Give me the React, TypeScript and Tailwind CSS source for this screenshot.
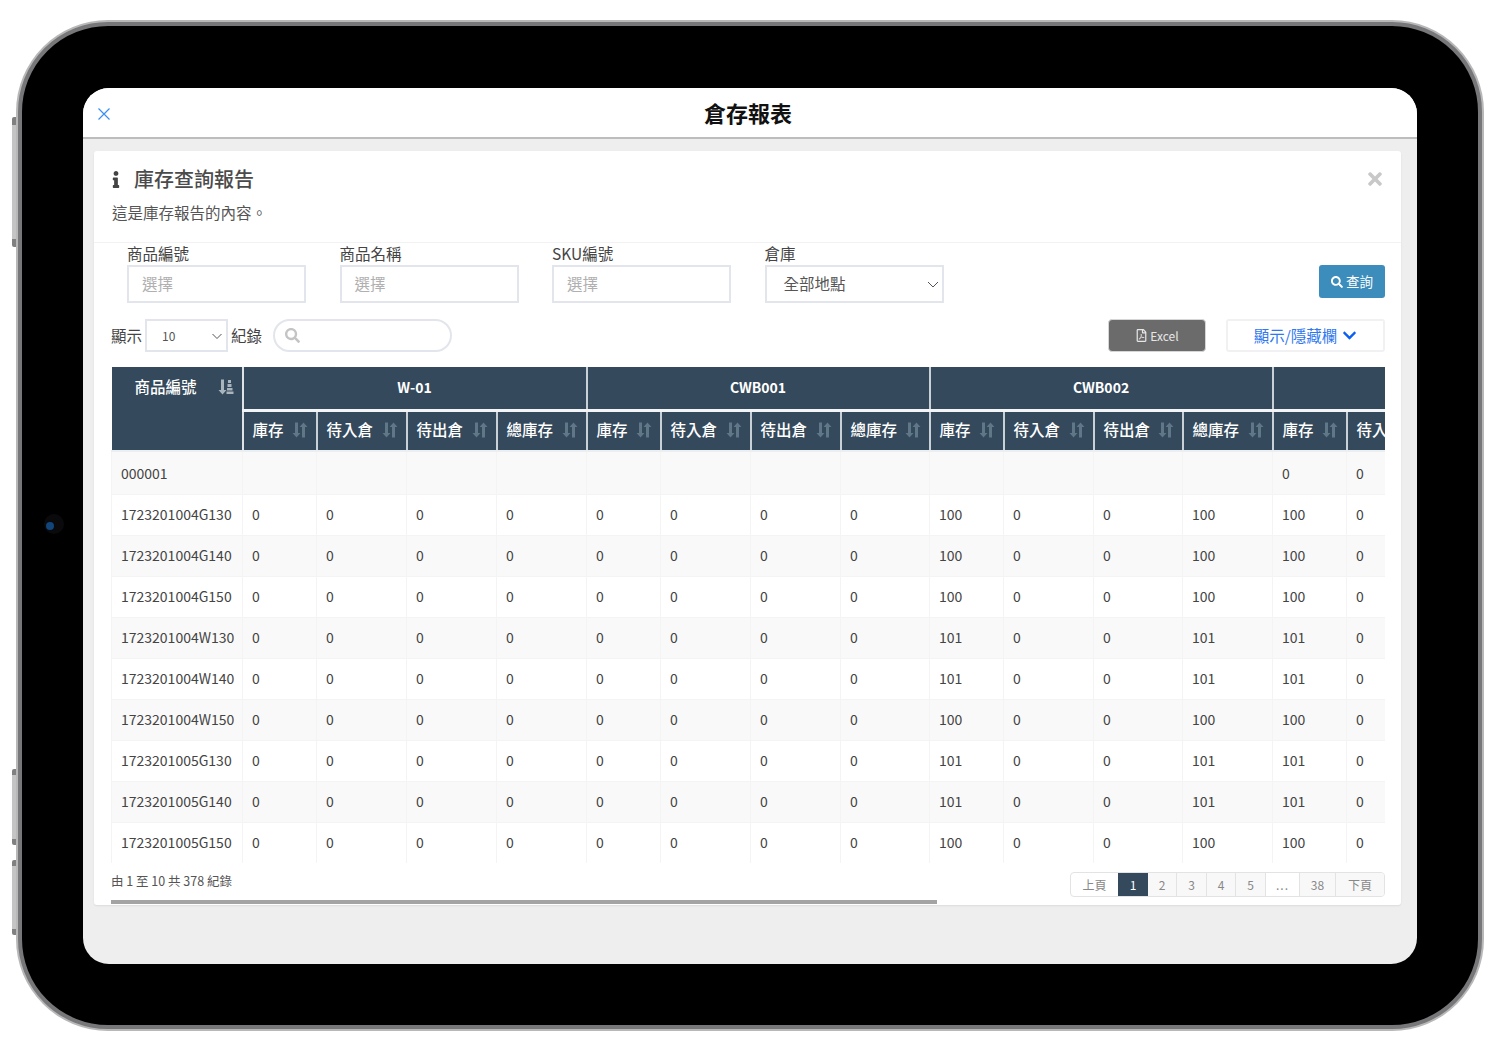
import { FaSearch, FaChevronDown, FaInfo, FaTimes, FaRegFilePdf } from "react-icons/fa";

const font = { fontFamily: '"Noto Sans CJK TC", "Noto Sans", sans-serif' };

function SortBoth() {
  return (
    <svg width="16" height="16" viewBox="0 0 16 16" className="shrink-0 text-[#5f7787]" fill="currentColor">
      <path d="M3 0.5h3v10.5h2.5L4.5 15.5 0.5 11H3z" />
      <path d="M10 15.5h3V5h2.5L11.5 0.5 7.5 5H10z" />
    </svg>
  );
}

function SortAsc() {
  return (
    <svg width="16" height="16" viewBox="0 0 16 16" className="shrink-0 text-[#a9b5bd]" fill="currentColor">
      <path d="M3 0.5h3v10.5h2.5L4.5 15.5 0.5 11H3z" />
      <rect x="10" y="1" width="3" height="3" />
      <rect x="9.5" y="5" width="4" height="3" />
      <rect x="9" y="9" width="5.5" height="2.5" />
      <rect x="8.5" y="12.5" width="7" height="2.5" />
    </svg>
  );
}

const groups = ["W-01", "CWB001", "CWB002", ""];
const sub = ["庫存", "待入倉", "待出倉", "總庫存"];
const widths = [74, 90, 90, 90];

const rows: [string, number | null, number][] = [
  ["000001", null, 0],
  ["1723201004G130", 100, 100],
  ["1723201004G140", 100, 100],
  ["1723201004G150", 100, 100],
  ["1723201004W130", 101, 101],
  ["1723201004W140", 101, 101],
  ["1723201004W150", 100, 100],
  ["1723201005G130", 101, 101],
  ["1723201005G140", 101, 101],
  ["1723201005G150", 100, 100],
];

function Field({ label, value }: { label: string; value: string }) {
  return (
    <div className="w-[179px]">
      <div className="h-[22px] text-[15.5px] leading-[20px] text-[#444]">{label}</div>
      <div className="h-[38px] border-2 border-[#e3e5ec] pl-[13px] text-[15.5px] leading-[32px] text-[#b0b0b0]">{value}</div>
    </div>
  );
}

export default function App() {
  return (
    <div style={font} className="relative h-[1054px] w-[1504px] overflow-hidden bg-white pl-[18px] pt-[22px]">
      {/* side buttons */}
      <div className="absolute left-[12px] top-[117px] h-[130px] w-[5px] rounded-l-[2px] border-y-[8px] border-[#808080] bg-[#c4c4c4]" />
      <div className="absolute left-[12px] top-[769px] h-[76px] w-[5px] rounded-l-[2px] border-y-[6px] border-[#808080] bg-[#c4c4c4]" />
      <div className="absolute left-[12px] top-[860px] h-[75px] w-[5px] rounded-l-[2px] border-y-[6px] border-[#808080] bg-[#c4c4c4]" />

      <div className="relative h-[1007px] w-[1464px] rounded-[90px] border-[4px] border-[#77777a] bg-black pl-[61px] pt-[62px] shadow-[0_0_0_2px_#b8b8b8]">
        {/* camera */}
        <div className="absolute left-[22px] top-[488px] h-[20px] w-[20px] rounded-full bg-[#0a0a0c]">
          <div className="ml-[2px] mt-[8px] h-[8px] w-[8px] rounded-full bg-[#12457a]" />
        </div>
        <div className="h-[876px] w-[1334px] overflow-hidden rounded-[26px] bg-[#eeeeee]">
          {/* top bar */}
          <div className="relative flex h-[51px] items-center justify-center border-b-2 border-[#bdbdbd] bg-white pb-[2px] pr-[4px]">
            <svg className="absolute left-[15px] top-[20px]" width="12" height="12" viewBox="0 0 12 12" fill="none" stroke="#3b8ff0" strokeWidth="1.2">
              <path d="M0.5 0.5 11.5 11.5M11.5 0.5 0.5 11.5" />
            </svg>
            <span className="text-[22px] font-bold leading-[30px] text-[#111]">倉存報表</span>
          </div>

          {/* card */}
          <div className="ml-[11px] mt-[12px] h-[754px] w-[1307px] rounded-[3px] bg-white shadow-[0_1px_2px_rgba(0,0,0,0.08)]">
            <div className="relative h-[92px] border-b border-[#f2f2f2] pl-[18px] pt-[13px]">
              <div className="flex h-[30px] items-center">
                <FaInfo className="w-[8px] text-[17px] text-[#444]" />
                <span className="ml-[14px] text-[20px] font-medium leading-[30px] text-[#4b4b4b]">庫存查詢報告</span>
              </div>
              <div className="mt-[7px] text-[15.5px] leading-[22px] text-[#555]">這是庫存報告的內容。</div>
              <FaTimes className="absolute right-[16px] top-[18px] text-[20px] text-[#c8c8c8]" />
            </div>

            {/* filters */}
            <div className="flex h-[68px] pl-[33px] pr-[16px]">
              <div className="flex gap-[33.5px]">
                <Field label="商品編號" value="選擇" />
                <Field label="商品名稱" value="選擇" />
                <Field label="SKU編號" value="選擇" />
                <div className="w-[179px]">
                  <div className="h-[22px] text-[15.5px] leading-[20px] text-[#444]">倉庫</div>
                  <div className="flex h-[38px] items-center justify-between border-2 border-[#e3e5ec] pl-[17px] pr-[3px] text-[15.5px] text-[#555]">
                    <span>全部地點</span>
                    <svg width="12" height="12" viewBox="0 0 12 12" fill="none" stroke="#555" strokeWidth="1"><path d="M1 4l5 5 5-5" /></svg>
                  </div>
                </div>
              </div>
              <button className="ml-auto mt-[22px] flex h-[33px] w-[66px] items-center justify-center gap-[3px] rounded-[3px] bg-[#3c8dbc] text-[13.5px] text-white">
                <FaSearch className="text-[12px]" />
                <span>查詢</span>
              </button>
            </div>

            {/* toolbar */}
            <div className="mt-[8px] flex h-[36px] items-start pl-[17px] pr-[16px]">
              <span className="mt-[5px] text-[15.5px] leading-[22px] text-[#444]">顯示</span>
              <div className="ml-[3px] flex h-[33px] w-[83px] items-center justify-between border-2 border-[#e3e5ec] pl-[15px] pr-[3px] text-[12px] text-[#555]">
                <span className="pt-[1px]">10</span>
                <svg width="12" height="12" viewBox="0 0 12 12" fill="none" stroke="#555" strokeWidth="1"><path d="M1.5 4l4.5 4.5L10.5 4" /></svg>
              </div>
              <span className="ml-[3px] mt-[5px] text-[15.5px] leading-[22px] text-[#444]">紀錄</span>
              <div className="ml-[11px] flex h-[33px] w-[179px] items-center rounded-full border-2 border-[#e3e5ec] pl-[10px]">
                <FaSearch className="text-[15px] text-[#c4c4c4]" />
              </div>
              <button className="ml-auto flex h-[33px] w-[98px] items-center justify-center gap-[2px] rounded-[4px] border border-[#d6d6d6] bg-[#6b6b6b] text-[12px] text-[#e6e6e6]">
                <FaRegFilePdf className="text-[13px]" />
                <span>Excel</span>
              </button>
              <button className="ml-[20px] flex h-[33px] w-[159px] items-center justify-center gap-[5px] rounded-[3px] border-2 border-[#f1f1f4] text-[15.5px] text-[#2f78f0]">
                <span>顯示/隱藏欄</span>
                <FaChevronDown className="text-[15px] text-[#0d5ff0]" />
              </button>
            </div>

            {/* table */}
            <div className="ml-[17px] mt-[12px] h-[496px] w-[1274px] overflow-hidden">
              <table className="w-[1325px] table-fixed border-collapse text-[14px] text-[#444]">
                <colgroup>
                  <col className="w-[131px]" />
                  {groups.map((g, i) =>
                    (i === 3 ? widths.slice(0, 2) : widths).map((w, j) => (
                      <col key={`${i}-${j}`} style={{ width: (i === 2 && j === 2) || (i === 1 && j === 3) ? 89 : w }} />
                    ))
                  )}
                </colgroup>
                <thead className="bg-[#34495c] text-white">
                  <tr className="h-[43px]">
                    <th rowSpan={2} className="border-b-2 border-r-2 border-b-[#eceff1] border-r-[#dfe3e6] p-0 align-top">
                      <div className="flex h-[40px] items-center pl-[23px] pr-[8px] text-[15.5px] font-medium">
                        <span>商品編號</span>
                        <span className="ml-auto"><SortAsc /></span>
                      </div>
                    </th>
                    {groups.map((g, i) => (
                      <th key={i} colSpan={i === 3 ? 2 : 4} className="border-b-[3px] border-r-2 border-b-[#f2f4f5] border-r-[#c9d0d6] text-[14px] font-bold">
                        {g}
                      </th>
                    ))}
                  </tr>
                  <tr className="h-[41px]">
                    {groups.map((g, i) =>
                      (i === 3 ? sub.slice(0, 2) : sub).map((s, j) => (
                        <th key={`${i}-${j}`} className="border-b-2 border-r-2 border-b-[#eceff1] border-r-[#c9d0d6] p-0 text-left">
                          <div className="flex items-center justify-between whitespace-nowrap pb-[2px] pl-[9px] pr-[8px] text-[15.5px] font-medium">
                            <span>{s}</span>
                            <SortBoth />
                          </div>
                        </th>
                      ))
                    )}
                  </tr>
                </thead>
                <tbody>
                  {rows.map(([sku, c, t], r) => (
                    <tr key={sku} className={`${r === 0 ? "h-[43px]" : "h-[41px]"} ${r % 2 === 0 ? "bg-[#f9f9f9]" : "bg-white"}`}>
                      <td className={`whitespace-nowrap border border-[#f4f4f4] pl-[9px] ${r === 0 ? "pt-[1px]" : ""}`}>{sku}</td>
                      {groups.map((g, i) =>
                        (i === 3 ? sub.slice(0, 2) : sub).map((s, j) => {
                          let v: string = "0";
                          if (r === 0 && i < 3) v = "";
                          else if (r > 0 && i === 2 && (j === 0 || j === 3)) v = String(c);
                          else if (r > 0 && i === 3 && j === 0) v = String(t);
                          return (
                            <td key={`${i}-${j}`} className={`border border-[#f4f4f4] pl-[9px] ${r === 0 ? "pt-[1px]" : ""}`}>{v}</td>
                          );
                        })
                      )}
                    </tr>
                  ))}
                </tbody>
              </table>
            </div>

            {/* footer */}
            <div className="flex h-[37px] items-start pl-[17px] pr-[16px]">
              <span className="mt-[8px] text-[12.5px] leading-[20px] text-[#555]">由 1 至 10 共 378 紀錄</span>
              <div className="ml-auto mt-[9px] flex h-[25px] overflow-hidden rounded-[4px] border border-[#e3e3e3] text-[12px] leading-[23px] text-[#888]">
                <span className="w-[47px] text-center">上頁</span>
                <span className="w-[30px] bg-[#34495c] text-center text-white">1</span>
                <span className="w-[29px] border-r border-[#e3e3e3] bg-[#f8f8f8] text-center">2</span>
                <span className="w-[30px] border-r border-[#e3e3e3] bg-[#f8f8f8] text-center">3</span>
                <span className="w-[29px] border-r border-[#e3e3e3] bg-[#f8f8f8] text-center">4</span>
                <span className="w-[30px] border-r border-[#e3e3e3] bg-[#f8f8f8] text-center">5</span>
                <span className="w-[34px] border-r border-[#e3e3e3] text-center tracking-[1px]">...</span>
                <span className="w-[36px] border-r border-[#e3e3e3] bg-[#f8f8f8] text-center">38</span>
                <span className="w-[48px] bg-[#f8f8f8] text-center">下頁</span>
              </div>
            </div>
            <div className="ml-[17px] h-[4px] w-[826px] bg-[#a3a3a3]" />
          </div>
        </div>
      </div>
    </div>
  );
}
